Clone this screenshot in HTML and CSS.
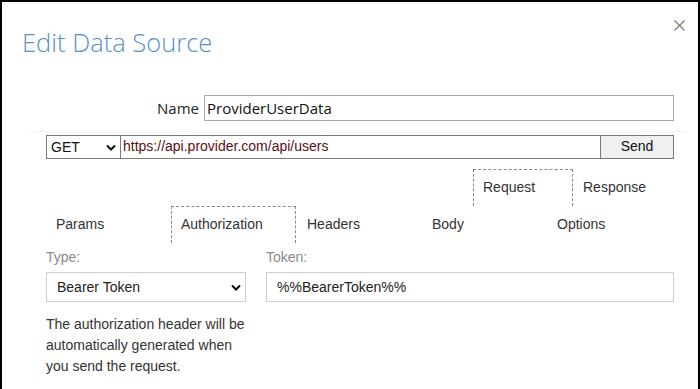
FILE: index.html
```html
<!DOCTYPE html>
<html>
<head>
<meta charset="utf-8">
<link rel="stylesheet" href="styles.css">
</head>
<body>
<div class="dialog">
  <div class="header">
    <h1 class="title">Edit Data Source</h1>
    <button class="close" aria-label="Close">
      <svg width="11" height="11" viewBox="0 0 11 11"><path d="M0.5 0.5 L10.5 10.5 M10.5 0.5 L0.5 10.5" stroke="#8a7a6a" stroke-width="1.2" fill="none"/></svg>
    </button>
  </div>
  <div class="name-row">
    <label class="name-label">Name</label>
    <div class="name-input">ProviderUserData</div>
  </div>
  <div class="divider"></div>
  <div class="url-row">
    <div class="method">GET<span class="chev"><svg width="10" height="7" viewBox="0 0 10 7"><path d="M1 1.5 L5 5.5 L9 1.5" stroke="#111" stroke-width="2" fill="none"/></svg></span></div>
    <div class="url">https://api.provider.com/api/users</div>
    <div class="send">Send</div>
  </div>
  <div class="rr-tabs">
    <div class="tab rr active">Request</div>
    <div class="tab rr">Response</div>
  </div>
  <div class="sub-tabs">
    <div class="tab sub">Params</div>
    <div class="tab sub active">Authorization</div>
    <div class="tab sub">Headers</div>
    <div class="tab sub">Body</div>
    <div class="tab sub">Options</div>
  </div>
  <div class="auth">
    <div class="col left">
      <div class="field-label">Type:</div>
      <div class="select">Bearer Token<span class="chev"><svg width="10" height="7" viewBox="0 0 10 7"><path d="M1 1.5 L5 5.5 L9 1.5" stroke="#111" stroke-width="2" fill="none"/></svg></span></div>
      <p class="help">The authorization header will be automatically generated when you send the request.</p>
    </div>
    <div class="col right">
      <div class="field-label">Token:</div>
      <div class="text-input">%%BearerToken%%</div>
    </div>
  </div>
</div>
</body>
</html>
```
FILE: styles.css
```css
* { box-sizing: border-box; }
html, body { margin: 0; padding: 0; background: #fff; }
body { width: 700px; height: 389px; overflow: hidden; }
.dialog {
  width: 700px;
  height: 389px;
  border: 2px solid #000;
  border-bottom: none;
  font-family: "Liberation Sans", Arial, sans-serif;
  font-size: 14px;
  color: #222;
}
.header {
  display: flex;
  justify-content: space-between;
  align-items: flex-start;
  padding: 24px 12px 0 20px;
  height: 92px;
}
.title {
  margin: 0;
  font-family: "Open Sans", sans-serif;
  font-weight: 300;
  font-size: 25.5px;
  line-height: 32px;
  color: #5a8fcb;
}
.close {
  border: none;
  background: none;
  padding: 0;
  margin-top: -6px;
  width: 12px;
  height: 12px;
  display: flex;
}
.name-row {
  display: flex;
  align-items: center;
  padding-left: 155px;
  height: 28px;
}
.name-label {
  font-family: "Open Sans", sans-serif;
  font-size: 15px;
  color: #222;
  width: 47px;
}
.name-input {
  width: 470px;
  height: 26px;
  border: 1px solid #a9a9a9;
  font-family: "Open Sans", sans-serif;
  font-size: 15px;
  line-height: 24px;
  padding-left: 2px;
  color: #111;
}
.divider {
  height: 1px;
  background: #f3f3f3;
  margin: 9px 10px 3px 28px;
}
.url-row {
  display: flex;
  margin-left: 44px;
  width: 628px;
  height: 24px;
}
.method {
  width: 75px;
  border: 1px solid #7a7a7a;
  display: flex;
  align-items: center;
  justify-content: space-between;
  padding: 0 4px 0 4px;
  color: #111;
}
.method .chev { display: flex; }
.url {
  flex: 1;
  border: 1px solid #7a7a7a;
  border-left: none;
  padding-left: 2px;
  line-height: 21px;
  color: #5a1010;
}
.send {
  width: 74px;
  border: 1px solid #7a7a7a;
  background: #f0f0f0;
  text-align: center;
  line-height: 21px;
  color: #111;
  margin-left: -1px;
}
.rr-tabs {
  display: flex;
  justify-content: flex-end;
  margin-top: 10px;
  padding-right: 25px;
  height: 37px;
}
.tab {
  color: #333;
  border: 1px dashed transparent;
  border-bottom: none;
}
.tab.active { border-color: #888; }
.tab.rr {
  width: 100px;
  padding: 9px 0 0 9px;
}
.sub-tabs {
  display: flex;
  margin-left: 44px;
  height: 37px;
}
.tab.sub {
  width: 125px;
  padding: 9px 0 0 9px;
}
.tab.sub:nth-child(n+3) { padding-left: 10px; }
.auth {
  display: flex;
  margin-left: 44px;
  margin-top: 6px;
  width: 628px;
  gap: 20px;
}
.col.left { width: 200px; }
.col.right { flex: 1; }
.field-label {
  color: #8a8a8a;
  height: 23px;
}
.select, .text-input {
  height: 30px;
  border: 1px solid #cfcfcf;
  display: flex;
  align-items: center;
  padding-left: 10px;
  color: #222;
}
.select { justify-content: space-between; padding-right: 4px; }
.select .chev { display: flex; }
.help {
  margin: 12px 0 0;
  line-height: 21px;
  color: #333;
}
```
